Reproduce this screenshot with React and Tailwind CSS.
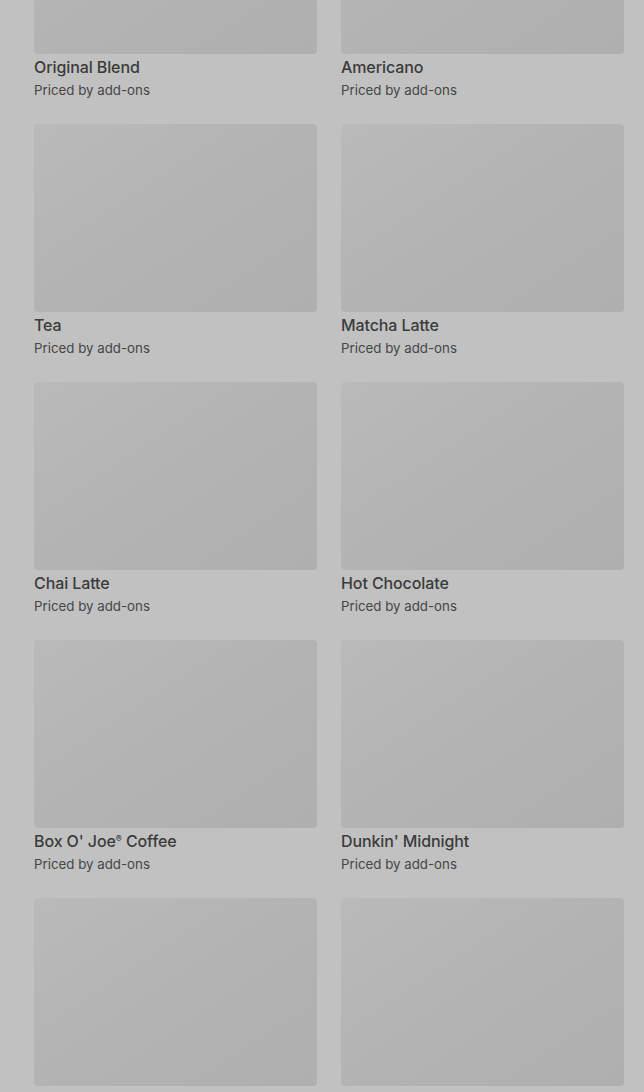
import React from "react";

const items = [
    { name: "Original Blend" },
    { name: "Americano" },
    { name: "Tea" },
    { name: "Matcha Latte" },
    { name: "Chai Latte" },
    { name: "Hot Chocolate" },
    { name: "Box O' Joe", mark: true, rest: " Coffee" },
    { name: "Dunkin' Midnight" },
    // next row is only peeking in, text is below the fold
    { name: null },
    { name: null },
];

const MenuCard = ({ item }) => {
    return (
        <div className="flex flex-col h-[258px]">
            <div className="h-[188px] shrink-0 rounded-sm bg-gradient-to-br from-[#bababa] via-[#b3b3b3] to-[#afafaf]" />
            {item.name && (
                <>
                    <h4 className="mt-[3px] text-[16px] leading-5 font-medium tracking-[-0.1px] text-[#3b3b3b]">
                        {item.name}
                        {item.mark && <span className="relative -top-[5px] text-[9px] leading-none">®</span>}
                        {item.rest}
                    </h4>
                    <p className="mt-[3px] text-[13.3px] leading-5 text-[#464646]">Priced by add-ons</p>
                </>
            )}
        </div>
    );
};

export default function App() {
    return (
        <div
            className="w-[644px] h-[1092px] overflow-hidden bg-[#c1c1c1]"
            style={{ fontFamily: "Inter, 'Liberation Sans', sans-serif" }}
        >
            <div className="-mt-[134px] pl-[34px] pr-[20px] grid grid-cols-2 gap-x-[24px]">
                {items.map((item, i) => (
                    <MenuCard item={item} key={i} />
                ))}
            </div>
        </div>
    );
}
